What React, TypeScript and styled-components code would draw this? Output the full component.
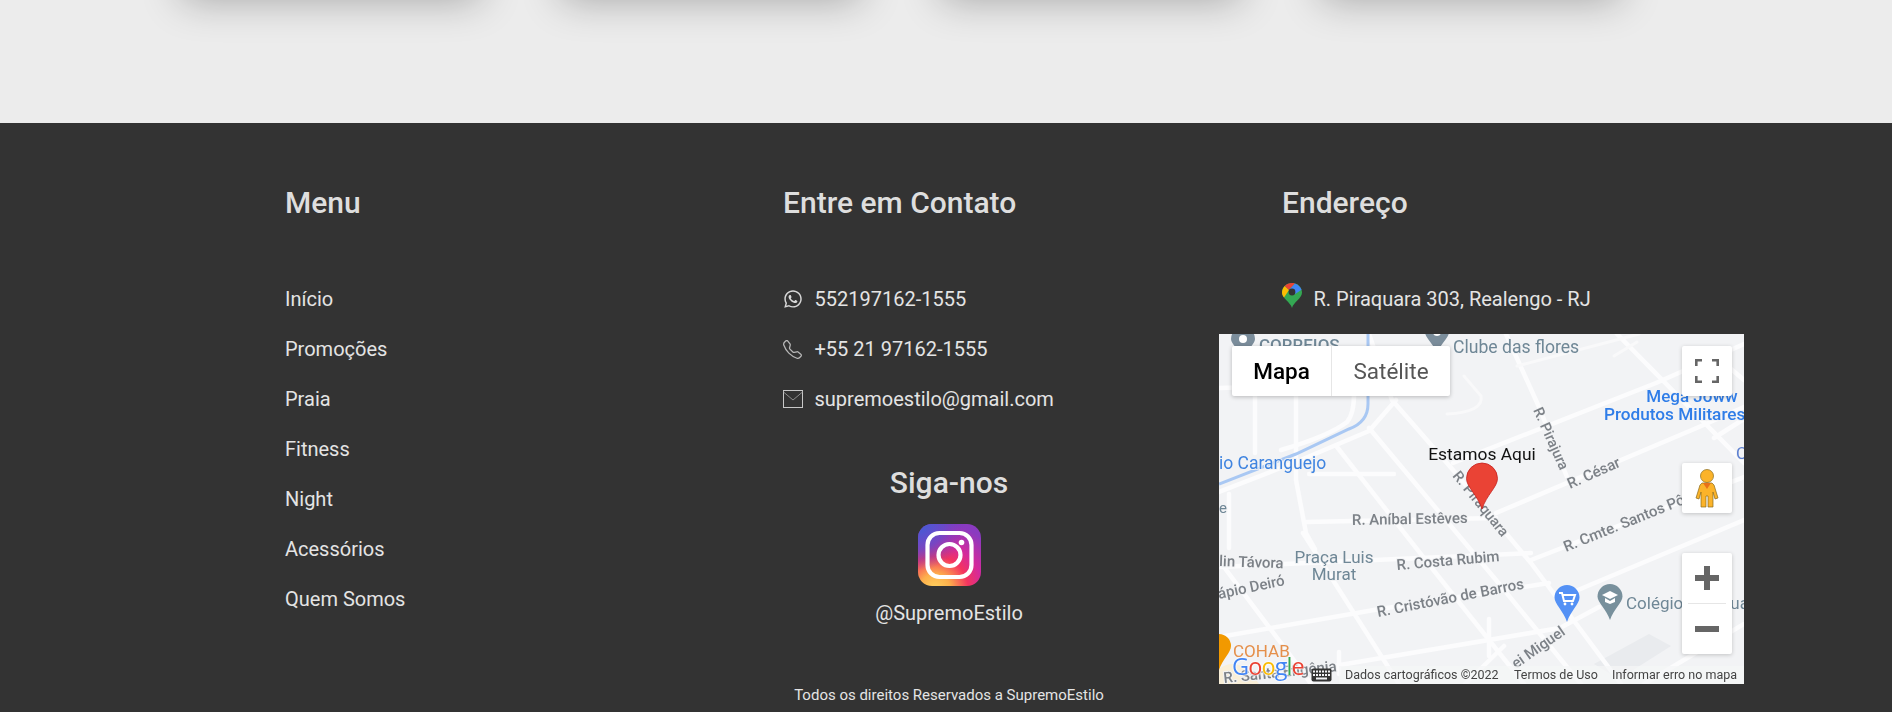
import React from "react";
import styled, { createGlobalStyle } from "styled-components";
import { FaWhatsapp } from "react-icons/fa";
import { BsTelephone } from "react-icons/bs";

const Global = createGlobalStyle`
  html, body { margin: 0; padding: 0; background: #ececec; overflow: hidden; }
  body { font-family: Roboto, "Liberation Sans", sans-serif; }
`;

const Page = styled.div`
  width: 1892px;
  height: 712px;
  display: flex;
  flex-direction: column;
`;
const CardsBand = styled.section`
  height: 123px;
  flex: none;
  background: #ececec;
  overflow: hidden;
  display: flex;
  gap: 82px;
  padding-left: 182px;
`;
const Card = styled.div`
  width: 298px;
  height: 100px;
  margin-top: -110px;
  flex: none;
  background: #fff;
  box-shadow: 0 10px 40px rgba(0, 0, 0, 0.3);
`;
const Footer = styled.footer`
  flex: 1;
  background: #333;
  color: #e2e2e2;
  display: grid;
  grid-template-columns: 498px 436px 525px;
  padding: 64px 0 0 285px;
  align-items: start;
`;
const Column = styled.div`
  display: flex;
  flex-direction: column;
  align-items: flex-start;
`;
const Heading = styled.h3<{ $inset?: number }>`
  margin: 0 0 55px;
  padding-left: ${(p) => p.$inset ?? 0}px;
  font-size: 30px;
  line-height: 32px;
  font-weight: 500;
  color: #dedede;
`;
const Rows = styled.ul`
  list-style: none;
  margin: 0;
  padding: 0;
`;
const Row = styled.li`
  height: 50px;
  display: flex;
  align-items: center;
  font-size: 20px;
  color: #e4e4e4;
`;
const IconSlot = styled.span<{ $tone?: string; $lift?: number }>`
  width: 31.5px;
  flex: none;
  display: flex;
  align-items: center;
  color: ${(p) => p.$tone ?? "#d8d8d8"};
  margin-bottom: ${(p) => p.$lift ?? 0}px;
`;
const Follow = styled.div`
  width: 332px;
  display: flex;
  flex-direction: column;
  align-items: center;
  margin-top: 43px;
`;
const FollowTitle = styled.h3`
  margin: 0 0 25px;
  font-size: 30px;
  line-height: 32px;
  font-weight: 500;
  color: #dedede;
`;
const Handle = styled.div`
  margin-top: 15px;
  font-size: 20px;
  line-height: 24px;
  color: #e4e4e4;
`;
const Copy = styled.div`
  margin-top: 60px;
  font-size: 15px;
  line-height: 20px;
  color: #e4e4e4;
  white-space: nowrap;
`;
const AddressRow = styled.div`
  height: 50px;
  padding-left: 63px;
  display: flex;
  align-items: center;
  font-size: 20px;
  color: #e4e4e4;
  margin-bottom: 10px;
`;
const Map = styled.div`
  position: relative;
  width: 525px;
  height: 350px;
  overflow: hidden;
  background: #f2f3f5;
  filter: blur(0.4px);
`;
const MapArt = styled.svg`
  display: block;
  font-family: Roboto, "Liberation Sans", sans-serif;
`;
const Label = styled.text<{ $c: string; $s: number; $w: number }>`
  fill: ${(p) => p.$c};
  font-size: ${(p) => p.$s}px;
  font-weight: ${(p) => p.$w};
  paint-order: stroke;
  stroke: #f2f3f5;
  stroke-width: 2px;
`;
const MapTabs = styled.div`
  position: absolute;
  left: 13px;
  top: 12px;
  height: 50px;
  display: flex;
  background: #fff;
  border-radius: 2px;
  box-shadow: 0 1px 4px rgba(0, 0, 0, 0.25);
`;
const MapTab = styled.div<{ $on?: boolean; $w: number }>`
  width: ${(p) => p.$w}px;
  display: flex;
  align-items: center;
  justify-content: center;
  font-size: 22.5px;
  font-weight: ${(p) => (p.$on ? 500 : 400)};
  color: ${(p) => (p.$on ? "#000" : "#565656")};
  border-right: ${(p) => (p.$on ? "1px solid #e6e6e6" : "none")};
`;
const MapButton = styled.div<{ $top: number; $h?: number }>`
  position: absolute;
  left: 463px;
  top: ${(p) => p.$top}px;
  width: 50px;
  height: ${(p) => p.$h ?? 50}px;
  background: #fff;
  border-radius: 2px;
  box-shadow: 0 1px 4px rgba(0, 0, 0, 0.2);
  display: flex;
  flex-direction: column;
  align-items: center;
  justify-content: center;
`;
const ZoomRule = styled.div`
  width: 38px;
  height: 1px;
  background: #e6e6e6;
`;
const ZoomCell = styled.div`
  height: 50px;
  display: flex;
  align-items: center;
  justify-content: center;
`;
const Attribution = styled.div`
  position: absolute;
  right: 0;
  bottom: 0;
  height: 18px;
  width: 405px;
  box-sizing: border-box;
  padding: 0 0 2px 6px;
  background: rgba(245, 246, 247, 0.7);
  display: flex;
  align-items: center;
  font-size: 12.5px;
  color: #444;
  white-space: nowrap;
`;
const AttrItem = styled.span<{ $w: number }>`
  width: ${(p) => p.$w}px;
  flex: none;
`;
const KeyboardSlot = styled.span`
  position: absolute;
  left: 92px;
  bottom: 2px;
  display: flex;
`;
const Logo = styled.div`
  position: absolute;
  left: 13px;
  bottom: 5px;
  font-family: "Open Sans", "Liberation Sans", sans-serif;
  font-size: 23.5px;
  line-height: 26px;
  letter-spacing: -0.9px;
  text-shadow: 0 0 2px #fff, 0 0 2px #fff, 0 0 2px #fff;
`;
const LogoLetter = styled.span<{ $c: string }>`
  color: ${(p) => p.$c};
`;

const menu = ["Início", "Promoções", "Praia", "Fitness", "Night", "Acessórios", "Quem Somos"];

const roads: string[] = [
  "M150 0 L173 66 L234 136 L312 229 L402 350",
  "M398 0 L525 129",
  "M234 129 L437 49 L525 10",
  "M277 179 L480 93 L525 73",
  "M312 226 L525 143",
  "M359 256 L525 186",
  "M87 188 L277 184",
  "M0 233 L178 225 L312 219",
  "M0 303 L155 276 L330 249",
  "M109 333 L341 294 L380 273",
  "M150 94 L277 246 L348 333 L362 350",
  "M118 113 L212 233 L305 350",
  "M84 199 L180 350",
  "M2 229 L80 333 L92 350",
  "M77 53 L77 146 L87 199 L96 215",
  "M36 53 L36 119",
  "M0 54 L36 53",
  "M287 0 L320 73 L348 143",
  "M0 158 L77 128 L150 97 L177 66",
  "M62 116 Q110 102 128 88 Q135 80 135 60",
  "M10 160 L10 214",
  "M90 140 L175 140",
  "M512 35 L525 46",
  "M495 104 L525 85",
  "M246 350 L285 312",
  "M270 322 L270 285",
  "M120 340 L120 318",
  "M425 350 L525 290",
];
const thinRoads: string[] = [
  "M228 80 Q265 78 262 62 L245 42",
  "M298 32 L420 0",
  "M395 22 L418 8",
];

type Lbl = { t: string; x: number; y: number; r?: number; c?: string; s?: number; w?: number; a?: "middle" };
const GREY = "#7c8187";
const POI = "#6f8796";
const BLUE = "#2f7de8";
const labels: Lbl[] = [
  { t: "CORREIOS", x: 40, y: 17, c: POI, s: 17, w: 500 },
  { t: "Clube das flores", x: 234, y: 19, c: POI, s: 17.6 },
  { t: "Mega Joww", x: 473, y: 68, c: BLUE, s: 17, w: 500, a: "middle" },
  { t: "Produtos Militares", x: 385, y: 86, c: BLUE, s: 17.2, w: 500 },
  { t: "io Caranguejo", x: 0, y: 135, c: "#3f84e0", s: 17.5 },
  { t: "e", x: 0, y: 179, c: POI, s: 15 },
  { t: "C", x: 517, y: 125, c: "#5c7fd0", s: 17 },
  { t: "R. Pirajura", x: 314, y: 76, r: 66, s: 14.5, w: 500 },
  { t: "R. César", x: 351, y: 155, r: -24, s: 15, w: 500 },
  { t: "R. Aníbal Estêves", x: 133, y: 191, r: -1, s: 15, w: 500 },
  { t: "R. Piraquara", x: 233, y: 142, r: 51, s: 14.5, w: 500 },
  { t: "R. Cmte. Santos Pôrto", x: 347, y: 218, r: -22, s: 15, w: 500 },
  { t: "R. Costa Rubim", x: 178, y: 236, r: -5, s: 15, w: 500 },
  { t: "R. Cristóvão de Barros", x: 159, y: 283, r: -11, s: 15, w: 500 },
  { t: "lin Távora", x: 0, y: 232, r: 2, s: 15, w: 500 },
  { t: "ápio Deiró", x: 0, y: 265, r: -12, s: 15, w: 500 },
  { t: "Praça Luis", x: 115, y: 229, c: POI, s: 17, a: "middle" },
  { t: "Murat", x: 115, y: 246, c: POI, s: 17, a: "middle" },
  { t: "ei Miguel", x: 297, y: 335, r: -35, s: 15, w: 500 },
  { t: "Colégio Estadual", x: 407, y: 275, c: POI, s: 17 },
  { t: "R. Santa Efigênia", x: 5, y: 349, r: -6, s: 15, w: 500 },
  { t: "COHAB", x: 14, y: 323, c: "#e58f4a", s: 17 },
];

const teardrop = (cx: number, top: number, w: number, h: number) => {
  const r = w / 2;
  const tip = top + h;
  return `M${cx} ${tip} C${cx - r * 0.28} ${tip - h * 0.3} ${cx - r} ${top + h * 0.52} ${cx - r} ${top + r} A${r} ${r} 0 1 1 ${cx + r} ${top + r} C${cx + r} ${top + h * 0.52} ${cx + r * 0.28} ${tip - h * 0.3} ${cx} ${tip} Z`;
};

const MapDrawing = () => (
  <MapArt width={525} height={350} viewBox="0 0 525 350">
    <rect width="525" height="350" fill="#f2f3f5" />
    <path d="M375 330 L430 300 L452 312 L400 345 Z" fill="#e9ebee" />
    <g fill="none" stroke="#fcfcfd" strokeLinejoin="round" strokeLinecap="round">
      {roads.map((d) => (
        <path key={d} d={d} strokeWidth={4.5} />
      ))}
      {thinRoads.map((d) => (
        <path key={d} d={d} strokeWidth={3} stroke="#f9f9fa" />
      ))}
    </g>
    <path d="M0 150 L77 120 L130 95 Q149 88 149 70 L149 0" fill="none" stroke="#a9c8f3" strokeWidth={3} />
    <path d="M0 335 Q20 320 40 350 L0 350 Z" fill="#f9efd8" />
    {labels.map((l) => (
      <Label
        key={l.t}
        x={l.x}
        y={l.y}
        textAnchor={l.a}
        $c={l.c ?? GREY}
        $s={l.s ?? 14}
        $w={l.w ?? 400}
        transform={l.r ? `rotate(${l.r} ${l.x} ${l.y})` : undefined}
      >
        {l.t}
      </Label>
    ))}
    <path d={teardrop(24, -7, 24, 33)} fill="#7b8d9b" />
    <circle cx="24" cy="5" r="4" fill="#fff" />
    <path d={teardrop(218, -14, 24, 34)} fill="#7b8d9b" />
    <circle cx="218" cy="-2" r="4" fill="#fff" />
    <path d={teardrop(0, 300, 24, 36)} fill="#f29900" />
    <path d={teardrop(391, 250, 25, 36)} fill="#78909c" />
    <path d="M383 261 L391 257 L399 261 L391 265 Z M386 264 L391 267 L396 264 L396 268 L391 270 L386 268 Z" fill="#fff" />
    <path d={teardrop(348, 251, 25, 37)} fill="#5491f5" />
    <path d="M340 259 L343 259 L345 267 L354 267 L356 261 L344 261" fill="none" stroke="#fff" strokeWidth={2} />
    <circle cx="346" cy="270" r="1.4" fill="#fff" />
    <circle cx="353" cy="270" r="1.4" fill="#fff" />
    <path d={teardrop(263, 129, 31, 46)} fill="#ea4335" stroke="#c5221f" strokeWidth={0.8} />
    <Label x={263} y={126} textAnchor="middle" $c="#111" $s={17.4} $w={400}>
      Estamos Aqui
    </Label>
  </MapArt>
);

const Pegman = () => (
  <svg width="24" height="40" viewBox="0 0 24 40">
    <g stroke="#8a6a1a" strokeWidth="0.7" fill="#fbb32a">
      <circle cx="12" cy="8" r="6.5" />
      <path d="M7 15 L17 15 L19 17 L23 30 L20 31 L18 24 L18 39 L13 39 L13 28 L11 28 L11 39 L6 39 L6 24 L4 31 L1 30 L5 17 Z" />
    </g>
    <path d="M8 15 L16 15 L12 21 Z" fill="#e8711a" />
  </svg>
);

const FullscreenIcon = () => (
  <svg width="24" height="24" viewBox="0 0 24 24" fill="none" stroke="#666" strokeWidth="2.6">
    <path d="M1.3 7 V1.3 H7 M17 1.3 H22.7 V7 M22.7 17 V22.7 H17 M7 22.7 H1.3 V17" />
  </svg>
);
const PlusIcon = () => (
  <svg width="24" height="24" viewBox="0 0 24 24" fill="#666">
    <path d="M9 0 H15 V9 H24 V15 H15 V24 H9 V15 H0 V9 H9 Z" />
  </svg>
);
const MinusIcon = () => (
  <svg width="24" height="24" viewBox="0 0 24 24" fill="#666">
    <rect y="9" width="24" height="6" />
  </svg>
);
const KeyboardIcon = () => (
  <svg width="21" height="14" viewBox="0 0 21 14">
    <rect x="0.5" y="0.5" width="20" height="13" rx="2" fill="#333" />
    <g fill="#f2f3f5">
      {[2, 5, 8, 11, 14, 17].map((x) => (
        <React.Fragment key={x}>
          <rect x={x} y="2.5" width="2" height="2" />
          <rect x={x} y="6" width="2" height="2" />
        </React.Fragment>
      ))}
      <rect x="5" y="9.5" width="11" height="2" />
    </g>
  </svg>
);
const MailIcon = () => (
  <svg width="20" height="20" viewBox="0 0 20 20" fill="none" stroke="#c8c8c8" strokeWidth="1">
    <rect x="0.5" y="1.5" width="19" height="17" />
    <path d="M0.5 3 L10 11 L19.5 3" stroke="#8e8e8e" />
  </svg>
);
const MapsPin = () => (
  <svg width="20" height="25" viewBox="0 0 20 25">
    <path d="M10 25 C8.5 19 0 15.5 0 9.5 C0 4.2 4.5 0 10 0 C15.5 0 20 4.2 20 9.5 C20 15.5 11.5 19 10 25 Z" fill="#34a853" />
    <path d="M2.7 3 L7 7 L2 14.5 C0.7 13 0 11.3 0 9.5 C0 7 1 4.7 2.7 3 Z" fill="#fbbc04" />
    <path d="M2.7 3 C4.5 1.1 7.1 0 10 0 C11 0 12 0.1 12.9 0.4 L7 7 Z" fill="#ea4335" />
    <path d="M12.9 0.4 C16 1.4 18.5 3.8 19.5 6.8 L13.2 11 L7 7 Z" fill="#4285f4" />
    <circle cx="10" cy="9" r="3.4" fill="#333" />
  </svg>
);
const InstagramIcon = () => (
  <svg width="63" height="62" viewBox="0 0 63 62">
    <defs>
      <radialGradient id="ig-a" cx="0.27" cy="1.05" r="1.1">
        <stop offset="0" stopColor="#ffd25f" />
        <stop offset="0.22" stopColor="#fdb04c" />
        <stop offset="0.48" stopColor="#f4345f" />
        <stop offset="0.68" stopColor="#d42a9c" />
        <stop offset="1" stopColor="#8a3ac0" />
      </radialGradient>
      <radialGradient id="ig-b" cx="0" cy="0" r="0.75">
        <stop offset="0" stopColor="#3f5fd8" />
        <stop offset="0.55" stopColor="#5a4fcf" stopOpacity="0.75" />
        <stop offset="1" stopColor="#6a3fc8" stopOpacity="0" />
      </radialGradient>
    </defs>
    <rect width="63" height="62" rx="14" fill="url(#ig-a)" />
    <rect width="63" height="62" rx="14" fill="url(#ig-b)" />
    <rect x="9.5" y="9" width="44" height="44" rx="12" fill="none" stroke="#fff" strokeWidth="4.2" />
    <circle cx="31.5" cy="31" r="11" fill="none" stroke="#fff" strokeWidth="4.2" />
    <circle cx="43.5" cy="18.5" r="2.8" fill="#fff" />
  </svg>
);

export default function App() {
  return (
    <Page>
      <Global />
      <CardsBand>
        <Card />
        <Card />
        <Card />
        <Card />
      </CardsBand>
      <Footer>
        <Column>
          <Heading>Menu</Heading>
          <Rows>
            {menu.map((m) => (
              <Row key={m}>{m}</Row>
            ))}
          </Rows>
        </Column>
        <Column>
          <Heading>Entre em Contato</Heading>
          <Rows>
            <Row>
              <IconSlot>
                <FaWhatsapp size={20} />
              </IconSlot>
              552197162-1555
            </Row>
            <Row>
              <IconSlot $tone="#b8b8b8">
                <BsTelephone size={19} />
              </IconSlot>
              +55 21 97162-1555
            </Row>
            <Row>
              <IconSlot>
                <MailIcon />
              </IconSlot>
              supremoestilo@gmail.com
            </Row>
          </Rows>
          <Follow>
            <FollowTitle>Siga-nos</FollowTitle>
            <InstagramIcon />
            <Handle>@SupremoEstilo</Handle>
            <Copy>Todos os direitos Reservados a SupremoEstilo</Copy>
          </Follow>
        </Column>
        <Column>
          <Heading $inset={63}>Endereço</Heading>
          <AddressRow>
            <IconSlot $lift={7}>
              <MapsPin />
            </IconSlot>
            R. Piraquara 303, Realengo - RJ
          </AddressRow>
          <Map>
            <MapDrawing />
            <MapTabs>
              <MapTab $on $w={99}>Mapa</MapTab>
              <MapTab $w={118}>Satélite</MapTab>
            </MapTabs>
            <MapButton $top={12}>
              <FullscreenIcon />
            </MapButton>
            <MapButton $top={129}>
              <Pegman />
            </MapButton>
            <MapButton $top={219} $h={101}>
              <ZoomCell>
                <PlusIcon />
              </ZoomCell>
              <ZoomRule />
              <ZoomCell>
                <MinusIcon />
              </ZoomCell>
            </MapButton>
            <Logo>
              <LogoLetter $c="#4285f4">G</LogoLetter>
              <LogoLetter $c="#ea4335">o</LogoLetter>
              <LogoLetter $c="#fbbc05">o</LogoLetter>
              <LogoLetter $c="#4285f4">g</LogoLetter>
              <LogoLetter $c="#34a853">l</LogoLetter>
              <LogoLetter $c="#ea4335">e</LogoLetter>
            </Logo>
            <KeyboardSlot>
              <KeyboardIcon />
            </KeyboardSlot>
            <Attribution>
              <AttrItem $w={169}>Dados cartográficos ©2022</AttrItem>
              <AttrItem $w={98}>Termos de Uso</AttrItem>
              <AttrItem $w={125}>Informar erro no mapa</AttrItem>
            </Attribution>
          </Map>
        </Column>
      </Footer>
    </Page>
  );
}
